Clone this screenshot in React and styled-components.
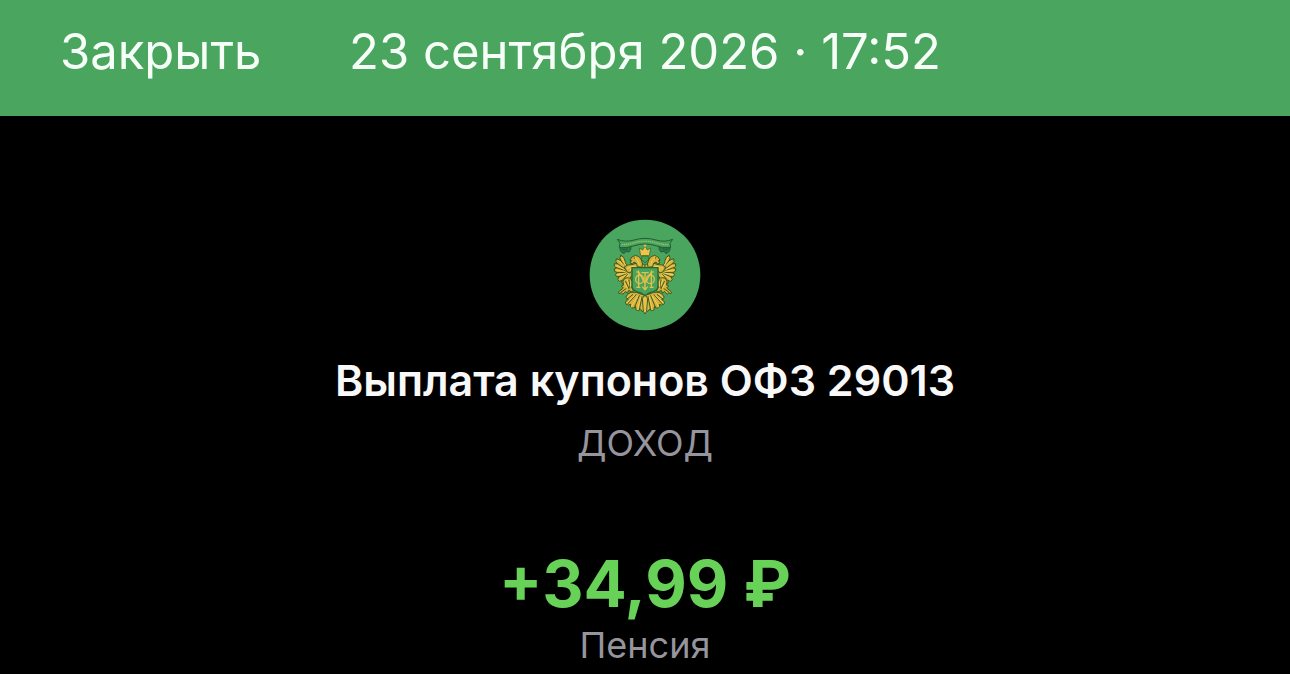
import React from "react";
import styled, { createGlobalStyle } from "styled-components";

const GlobalStyle = createGlobalStyle`
  *, *::before, *::after { box-sizing: border-box; }
  body {
    margin: 0;
    background: #000;
    color: #f8f8f8;
    font-family: Inter, "Noto Sans", sans-serif;
  }
`;

const TopBar = styled.header`
  display: grid;
  grid-template-columns: 1fr auto 1fr;
  align-items: start;
  padding: 22px 60px 34px;
  background: #4aa55e;
  color: #f6fff8;
`;

const CloseButton = styled.button`
  justify-self: start;
  padding: 0;
  border: 0;
  background: none;
  color: inherit;
  font: 400 49px/60px Inter, "Noto Sans", sans-serif;
  cursor: pointer;
`;

const DateTime = styled.time`
  font-size: 49px;
  line-height: 60px;
  white-space: nowrap;
`;

const Details = styled.main`
  display: flex;
  flex-direction: column;
  align-items: center;
  padding: 103px 24px 0;
  text-align: center;
`;

const Emblem = styled.svg`
  display: block;
  width: 112px;
  height: 112px;
`;

const Title = styled.h1`
  margin: 24px 0 0;
  font-size: 43px;
  line-height: 50px;
  font-weight: 600;
`;

const Caption = styled.p`
  margin: ${(p) => (p.$spaced ? "16px" : "0")} 0 0;
  color: #96959d;
  font-size: 36px;
  line-height: 44px;
`;

const Amount = styled.p`
  margin: 80px 0 0;
  color: #67d257;
  font-size: 64px;
  line-height: 78px;
  font-weight: 700;
`;

const INK = "#3b5a20";
const GOLD = "#d9b23c";
const LIGHT = "#f2cf58";

/* Left half of the eagle, with the axis of symmetry at x = 195. */
function EagleHalf() {
  return (
    <g stroke={INK} strokeWidth="3" strokeLinejoin="round" strokeLinecap="round" fill={GOLD}>
      {/* wing feathers, longest at the top */}
      <path d="M123 136q-8 8 0 16l-14-6q-5 9 4 16l-10-1q-3 9 6 13l-7 3q0 9 10 11l-6 5q1 9 11 8l-4 8q4 8 13 3l0 9q6 5 12-2l12-14q8-8 8-22l3-12-14-3q-12-2-12-16-2-12-12-16z" />
      <path d="M123 152l14 20M113 161l22 16M109 173l26 9M112 188l25-1M115 201l24-9M126 212l16-18" fill="none" />
      <path d="M126 143l10 22M116 152l18 16M108 165l24 13M109 180l25 4M112 194l25-5M119 206l20-12M131 214l14-19" fill="none" stroke={LIGHT} />
      {/* shoulder */}
      <path d="M134 170q10-8 22-6l12-4 10-6 17 12v11h-36l-8 12-9-3z" />
      <path d="M142 175q12-8 24-6M150 182q0-8 8-10" fill="none" stroke={LIGHT} />
      {/* neck and head */}
      <path d="M150 150q4-12 16-14 14 1 18 14 6 12 2 22l-14-2q0-12-10-14l-4 6-8-3 4-6z" />
      <path d="M166 143q10 8 12 22" fill="none" stroke={LIGHT} />
      <circle cx="163" cy="144" r="2" fill={INK} stroke="none" />
      {/* leg and talon */}
      <path d="M136 204q16-4 20 9 4 12-1 20l6 9-7 3-8-4-4 9-5-6-9 9-4-5-7 3q-4-6 3-9l10-8-6-6 7-3-2-10z" />
      <path d="M137 214l10 22M147 210l2 22M124 246l14-10" fill="none" />
      <path d="M142 210l5 16M134 220l8 14M153 214l-2 15" fill="none" stroke={LIGHT} />
      {/* tail */}
      <path d="M195 254l-14-2-12-5-16 0-10 6-6 9 8 6-9 8q0 9 9 9l7-2-1 9q9 6 16-2l1 10q8 5 14-3l5 8 12-12z" />
      <path d="M178 257l-15 36M168 254l-25 28M158 254l-18 14M186 260l-8 40" fill="none" />
      <path d="M182 262l-9 37M173 259l-20 33M163 257l-22 22M151 254l-9 8M190 262l-4 36" fill="none" stroke={LIGHT} />
    </g>
  );
}

/* Hanging fold and left half of the ribbon. */
function RibbonHalf() {
  return (
    <g stroke="#225c36" strokeWidth="3" strokeLinejoin="round" fill="#48a35c">
      <path d="M119 108l2 14q4 8 12 8l4-6 10 2q7-6 6-18l-10-4z" fill="#2d7a48" />
      <path d="M125 116q8 8 18 0" fill="none" />
      <path d="M196 85q-18 0-34 5-26 8-50-2l8 12-2 13q24 2 42-5 18-6 36-6" />
    </g>
  );
}

function MinistryEmblem() {
  return (
    <Emblem viewBox="27 27 336 336" role="img" aria-label="Эмблема">
      <circle cx="195" cy="195" r="166" fill="#4aa55e" />
      <RibbonHalf />
      <EagleHalf />
      <g transform="translate(390 0) scale(-1 1)">
        <RibbonHalf />
        <EagleHalf />
      </g>
      <path
        d="M125 104q18 0 34-5t36-5 36 5 34 5"
        fill="none"
        stroke="#9ac26a"
        strokeWidth="4"
        strokeDasharray="4 2"
      />
      {/* tail centre */}
      <path d="M195 254l8 12-3 38-5 8-5-8-3-38z" fill="#e8c048" stroke={INK} strokeWidth="3" />
      {/* crown */}
      <path
        d="M178 114l10 6 7-12 7 12 10-6-4 23h-26z"
        fill="#edc54a"
        stroke={INK}
        strokeWidth="2"
        strokeLinejoin="round"
      />
      <path d="M195 103v8M191 107h8" stroke="#edc54a" strokeWidth="3" />
      <path d="M186 138h18l2 10-11 11-11-11z" fill="#46a058" stroke={INK} strokeWidth="2" />
      {/* shield */}
      <path
        d="M156 173h78v58q-2 12-24 17l-15 9-15-9q-22-5-24-17z"
        fill="#48a35c"
        stroke="#2c6131"
        strokeWidth="4"
      />
      {/* monogram */}
      <g fill="none" stroke="#e3c04a" strokeWidth="4">
        <path d="M176 232v-46l19 34 19-34v46M195 188v50M184 188h22M169 186h9M212 186h9M169 232h12M209 232h12M187 230l8 9 8-9" />
        <ellipse cx="179" cy="208" rx="12" ry="13" />
        <ellipse cx="211" cy="208" rx="12" ry="13" />
      </g>
    </Emblem>
  );
}

export default function App() {
  return (
    <>
      <GlobalStyle />
      <TopBar>
        <CloseButton type="button">Закрыть</CloseButton>
        <DateTime dateTime="2026-09-23T17:52">23 сентября 2026 · 17:52</DateTime>
      </TopBar>
      <Details>
        <MinistryEmblem />
        <Title>Выплата купонов ОФЗ 29013</Title>
        <Caption $spaced>ДОХОД</Caption>
        <Amount>+34,99 ₽</Amount>
        <Caption>Пенсия</Caption>
      </Details>
    </>
  );
}
